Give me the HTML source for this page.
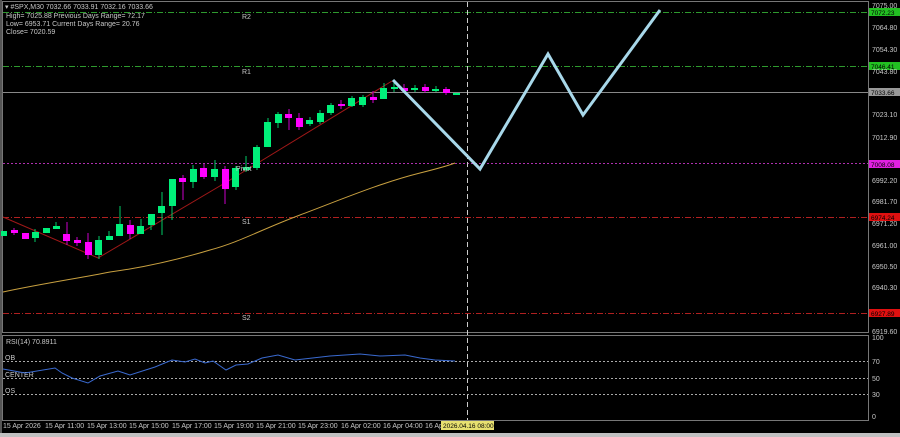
<!DOCTYPE html>
<html><head><meta charset="utf-8"><style>
html,body{margin:0;padding:0;background:#000;width:900px;height:437px;overflow:hidden}
svg{display:block}
text{font-family:"Liberation Sans",sans-serif;font-size:7px;fill:#c8c8c8}
text.k{fill:#000;font-size:6.5px}
</style></head><body>
<svg width="900" height="437" viewBox="0 0 900 437">
<rect width="900" height="437" fill="#000"/>
<rect x="2.5" y="1.5" width="866" height="331" fill="none" stroke="#777" stroke-width="1"/>
<rect x="2.5" y="335.5" width="866" height="85" fill="none" stroke="#777" stroke-width="1"/>
<rect x="0" y="433" width="900" height="4" fill="#c0c0c0"/>
<rect x="0" y="0" width="2" height="433" fill="#555"/>
<g stroke-width="1" fill="none">
<line x1="3" y1="12.5" x2="868" y2="12.5" stroke="#2e9a2e" stroke-dasharray="6,2,1,2"/>
<line x1="3" y1="66.5" x2="868" y2="66.5" stroke="#2e9a2e" stroke-dasharray="6,2,1,2"/>
<line x1="3" y1="92.5" x2="868" y2="92.5" stroke="#888"/>
<line x1="3" y1="163.5" x2="868" y2="163.5" stroke="#b030b0" stroke-dasharray="2,2"/>
<line x1="3" y1="217.5" x2="868" y2="217.5" stroke="#b02020" stroke-dasharray="6,2,1,2"/>
<line x1="3" y1="313.5" x2="868" y2="313.5" stroke="#b02020" stroke-dasharray="6,2,1,2"/>
<line x1="467.5" y1="2" x2="467.5" y2="420" stroke="#ccc" stroke-dasharray="5,3"/>
<line x1="3" y1="361.5" x2="868" y2="361.5" stroke="#aaa" stroke-dasharray="2,2"/>
<line x1="3" y1="378.5" x2="868" y2="378.5" stroke="#aaa" stroke-dasharray="2,2"/>
<line x1="3" y1="394.5" x2="868" y2="394.5" stroke="#aaa" stroke-dasharray="2,2"/>
</g>
<path d="M3,292 C40,284 80,278 110,272 C140,268 170,262 210,250 C240,242 260,230 300,215 C340,200 380,183 420,173 C440,168 450,165 455,163" stroke="#c8a040" stroke-width="1" fill="none"/>
<polyline points="3,217 98,258 230,180 392,81" stroke="#a01818" stroke-width="1" fill="none"/>
<g>
<line x1="14" y1="228" x2="14" y2="235" stroke="#c0c"/><rect x="11" y="230" width="7" height="3" fill="#f0f"/>
<rect x="1" y="231" width="6" height="5" fill="#00f07a"/>
<rect x="22" y="233" width="7" height="6" fill="#f0f"/>
<line x1="35" y1="229" x2="35" y2="242" stroke="#0c6"/><rect x="32" y="232" width="7" height="6" fill="#00f07a"/>
<rect x="43" y="228" width="7" height="5" fill="#00f07a"/>
<line x1="56" y1="222" x2="56" y2="229" stroke="#0c6"/><rect x="53" y="226" width="7" height="3" fill="#00f07a"/>
<line x1="67" y1="222" x2="67" y2="245" stroke="#c0c"/><rect x="63" y="234" width="7" height="7" fill="#f0f"/>
<line x1="77" y1="237" x2="77" y2="246" stroke="#c0c"/><rect x="74" y="240" width="7" height="3" fill="#f0f"/>
<line x1="88" y1="233" x2="88" y2="259" stroke="#c0c"/><rect x="85" y="242" width="7" height="13" fill="#f0f"/>
<line x1="99" y1="236" x2="99" y2="259" stroke="#0c6"/><rect x="95" y="240" width="7" height="15" fill="#00f07a"/>
<line x1="109" y1="231" x2="109" y2="240" stroke="#0c6"/><rect x="106" y="236" width="7" height="4" fill="#00f07a"/>
<line x1="120" y1="206" x2="120" y2="236" stroke="#0c6"/><rect x="116" y="224" width="7" height="12" fill="#00f07a"/>
<line x1="130" y1="220" x2="130" y2="239" stroke="#c0c"/><rect x="127" y="225" width="7" height="9" fill="#f0f"/>
<line x1="141" y1="219" x2="141" y2="234" stroke="#0c6"/><rect x="137" y="226" width="7" height="8" fill="#00f07a"/>
<line x1="151" y1="214" x2="151" y2="230" stroke="#0c6"/><rect x="148" y="214" width="7" height="11" fill="#00f07a"/>
<line x1="162" y1="192" x2="162" y2="235" stroke="#0c6"/><rect x="158" y="206" width="7" height="7" fill="#00f07a"/>
<line x1="172" y1="179" x2="172" y2="220" stroke="#0c6"/><rect x="169" y="179" width="7" height="27" fill="#00f07a"/>
<line x1="183" y1="175" x2="183" y2="200" stroke="#c0c"/><rect x="179" y="178" width="7" height="4" fill="#f0f"/>
<line x1="193" y1="165" x2="193" y2="188" stroke="#0c6"/><rect x="190" y="169" width="7" height="13" fill="#00f07a"/>
<line x1="204" y1="164" x2="204" y2="179" stroke="#c0c"/><rect x="200" y="168" width="7" height="9" fill="#f0f"/>
<line x1="215" y1="160" x2="215" y2="181" stroke="#0c6"/><rect x="211" y="169" width="7" height="8" fill="#00f07a"/>
<line x1="225" y1="166" x2="225" y2="204" stroke="#c0c"/><rect x="222" y="169" width="7" height="20" fill="#f0f"/>
<line x1="236" y1="166" x2="236" y2="190" stroke="#0c6"/><rect x="232" y="168" width="7" height="19" fill="#00f07a"/>
<line x1="246" y1="156" x2="246" y2="172" stroke="#0c6"/><rect x="243" y="167" width="7" height="3" fill="#00f07a"/>
<line x1="257" y1="145" x2="257" y2="170" stroke="#0c6"/><rect x="253" y="147" width="7" height="21" fill="#00f07a"/>
<line x1="268" y1="118" x2="268" y2="147" stroke="#0c6"/><rect x="264" y="122" width="7" height="25" fill="#00f07a"/>
<line x1="278" y1="112" x2="278" y2="128" stroke="#0c6"/><rect x="275" y="114" width="7" height="9" fill="#00f07a"/>
<line x1="289" y1="109" x2="289" y2="130" stroke="#c0c"/><rect x="285" y="114" width="7" height="4" fill="#f0f"/>
<line x1="299" y1="113" x2="299" y2="130" stroke="#c0c"/><rect x="296" y="118" width="7" height="9" fill="#f0f"/>
<line x1="310" y1="117" x2="310" y2="126" stroke="#0c6"/><rect x="306" y="120" width="7" height="4" fill="#00f07a"/>
<line x1="320" y1="110" x2="320" y2="124" stroke="#0c6"/><rect x="317" y="113" width="7" height="9" fill="#00f07a"/>
<line x1="331" y1="103" x2="331" y2="115" stroke="#0c6"/><rect x="327" y="105" width="7" height="8" fill="#00f07a"/>
<line x1="341" y1="100" x2="341" y2="109" stroke="#c0c"/><rect x="338" y="104" width="7" height="2" fill="#f0f"/>
<line x1="352" y1="96" x2="352" y2="107" stroke="#0c6"/><rect x="348" y="98" width="7" height="8" fill="#00f07a"/>
<line x1="363" y1="95" x2="363" y2="107" stroke="#0c6"/><rect x="359" y="97" width="7" height="8" fill="#00f07a"/>
<line x1="373" y1="91" x2="373" y2="103" stroke="#c0c"/><rect x="370" y="97" width="7" height="3" fill="#f0f"/>
<line x1="384" y1="83" x2="384" y2="99" stroke="#0c6"/><rect x="380" y="88" width="7" height="11" fill="#00f07a"/>
<line x1="394" y1="83" x2="394" y2="92" stroke="#0c6"/><rect x="391" y="87" width="7" height="2" fill="#00f07a"/>
<line x1="404" y1="84" x2="404" y2="92" stroke="#c0c"/><rect x="401" y="88" width="7" height="3" fill="#f0f"/>
<line x1="415" y1="85" x2="415" y2="92" stroke="#0c6"/><rect x="411" y="88" width="7" height="2" fill="#00f07a"/>
<line x1="425" y1="84" x2="425" y2="93" stroke="#c0c"/><rect x="422" y="87" width="7" height="4" fill="#f0f"/>
<line x1="436" y1="86" x2="436" y2="92" stroke="#0c6"/><rect x="432" y="89" width="7" height="2" fill="#00f07a"/>
<line x1="446" y1="87" x2="446" y2="95" stroke="#c0c"/><rect x="443" y="89" width="7" height="4" fill="#f0f"/>
<rect x="453" y="93" width="7" height="2" fill="#00f07a"/>
</g>
<polyline points="393,80 480,169 548,54 583,115 660,10" stroke="#a8d8ea" stroke-width="3" fill="none"/>
<text x="242" y="19">R2</text>
<text x="242" y="74">R1</text>
<text x="236" y="171">Pivot</text>
<text x="242" y="224">S1</text>
<text x="242" y="320">S2</text>
<text x="5" y="9">▾ #SPX,M30  7032.66 7033.91 7032.16 7033.66</text>
<text x="6" y="18">High= 7025.88    Previous Days Range= 72.17</text>
<text x="6" y="26">Low= 6953.71     Current Days Range= 20.76</text>
<text x="6" y="34">Close= 7020.59</text>
<g>
<text x="872" y="8">7075.00</text>
<rect x="869" y="8" width="31" height="8" fill="#22c022"/><text class="k" x="871" y="15">7072.23</text>
<text x="872" y="30">7064.80</text>
<text x="872" y="52">7054.30</text>
<rect x="869" y="62" width="31" height="8" fill="#22c022"/><text class="k" x="871" y="69">7046.41</text>
<text x="872" y="74">7043.80</text>
<rect x="869" y="88" width="31" height="8" fill="#999"/><text class="k" x="871" y="95">7033.66</text>
<text x="872" y="117">7023.10</text>
<text x="872" y="140">7012.90</text>
<rect x="869" y="160" width="31" height="8" fill="#e020e0"/><text class="k" x="871" y="167">7008.08</text>
<text x="872" y="183">6992.20</text>
<text x="872" y="204">6981.70</text>
<rect x="869" y="213" width="31" height="8" fill="#e01010"/><text class="k" x="871" y="220">6974.24</text>
<text x="872" y="226">6971.20</text>
<text x="872" y="248">6961.00</text>
<text x="872" y="269">6950.50</text>
<text x="872" y="290">6940.30</text>
<rect x="869" y="309" width="31" height="8" fill="#e01010"/><text class="k" x="871" y="316">6927.89</text>
<text x="872" y="334">6919.60</text>
<text x="872" y="340">100</text>
<text x="872" y="364">70</text>
<text x="872" y="381">50</text>
<text x="872" y="397">30</text>
<text x="872" y="419">0</text>
</g>
<text x="6" y="344">RSI(14) 70.8911</text>
<text x="5" y="360">OB</text>
<text x="5" y="377">CENTER</text>
<text x="5" y="393">OS</text>
<polyline points="3,369 25,373 55,368 62,373 72,378 88,383 100,376 118,371 130,375 155,367 172,360 185,362 195,359 205,363 213,361 226,370 236,365 248,364 262,358 278,355 295,360 330,356 360,354 380,356 405,355 420,358 435,360 455,361" stroke="#3a6ad0" stroke-width="1" fill="none"/>
<g>
<text x="3" y="428">15 Apr 2026</text>
<text x="45" y="428">15 Apr 11:00</text>
<text x="87" y="428">15 Apr 13:00</text>
<text x="129" y="428">15 Apr 15:00</text>
<text x="172" y="428">15 Apr 17:00</text>
<text x="214" y="428">15 Apr 19:00</text>
<text x="256" y="428">15 Apr 21:00</text>
<text x="298" y="428">15 Apr 23:00</text>
<text x="341" y="428">16 Apr 02:00</text>
<text x="383" y="428">16 Apr 04:00</text>
<text x="425" y="428">16 Ap</text>
<rect x="441" y="421" width="53" height="9" fill="#e8e070"/>
<text class="k" x="443" y="428">2026.04.16 08:00</text>
</g>
</svg>
</body></html>
